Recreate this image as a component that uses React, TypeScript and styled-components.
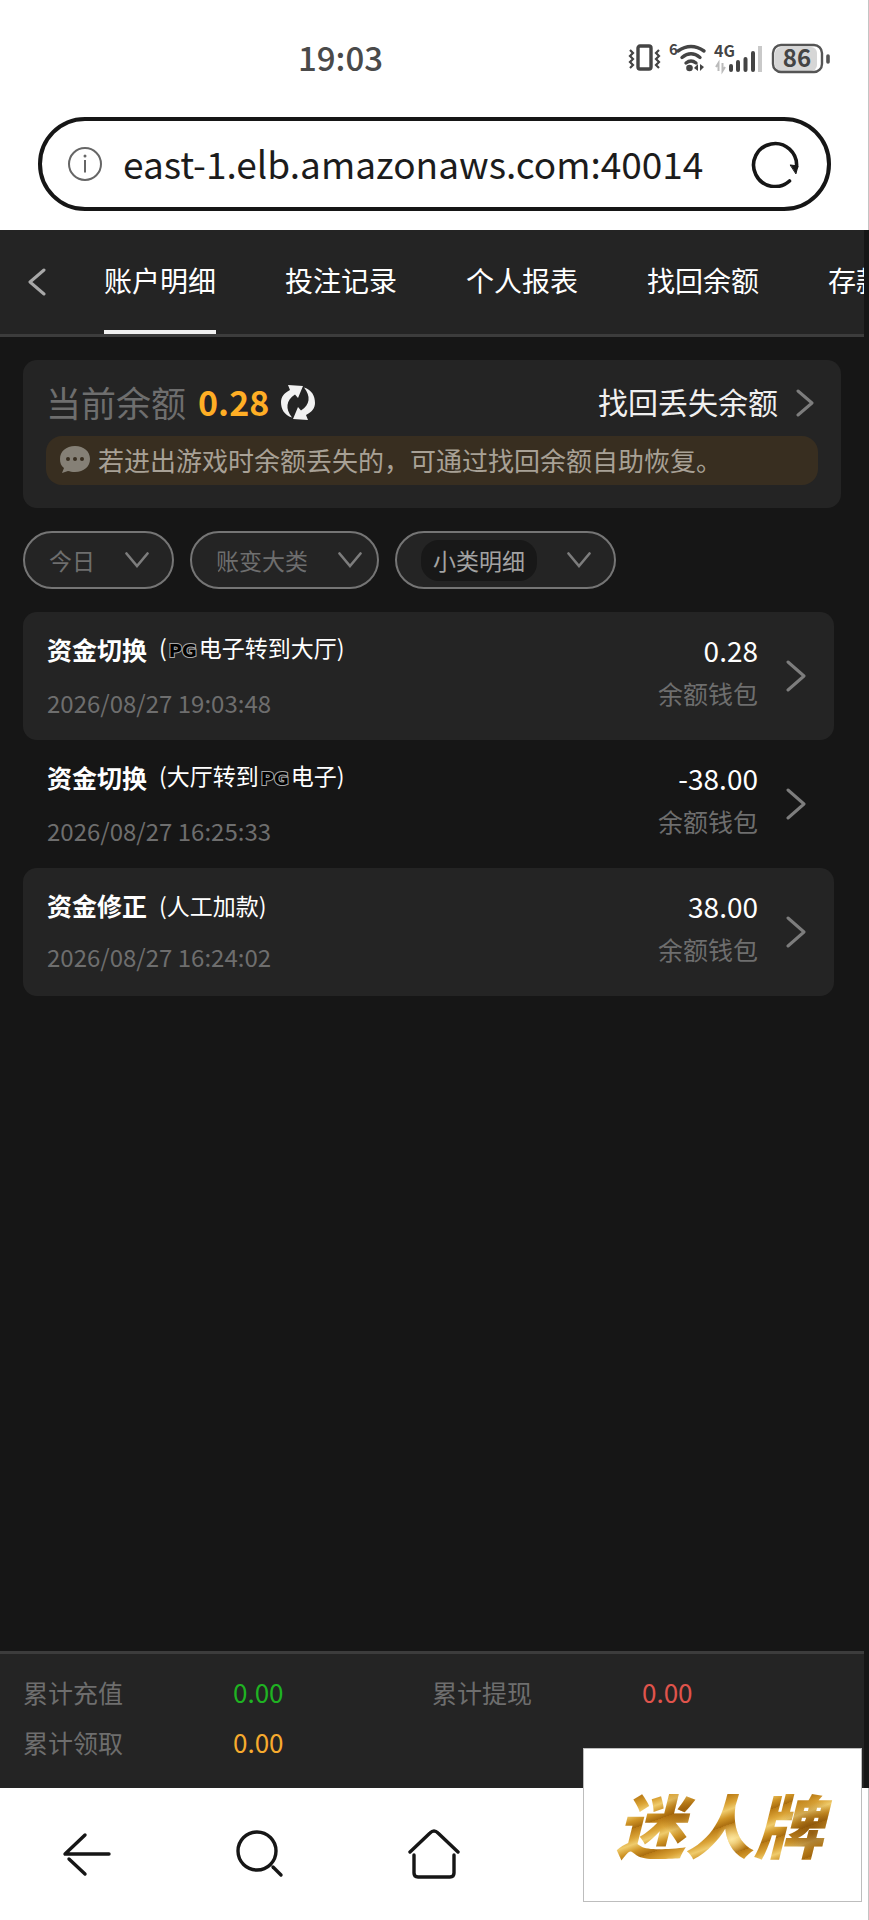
import React, { useState } from "react";
import styled, { createGlobalStyle, css } from "styled-components";

interface RecordItem {
    title: string;
    note: string[];
    time: string;
    amount: string;
}

interface ChevronProps {
    size?: "small" | "large";
    dir?: "left" | "right";
    color?: string;
}

const tabs = ["账户明细", "投注记录", "个人报表", "找回余额", "存款记录"];

// note parts equal to "PG" are drawn as the provider's outlined mark
const records: RecordItem[] = [
    { title: "资金切换", note: ["(", "PG", "电子转到大厅)"], time: "2026/08/27 19:03:48", amount: "0.28" },
    { title: "资金切换", note: ["(大厅转到", "PG", "电子)"], time: "2026/08/27 16:25:33", amount: "-38.00" },
    { title: "资金修正", note: ["(人工加款)"], time: "2026/08/27 16:24:02", amount: "38.00" },
];

const Chevron: React.FC<ChevronProps> = ({ size = "small", dir = "right", color = "#7d7d7d" }: ChevronProps) => {
    const w = size === "large" ? 20 : 18;
    const h = size === "large" ? 32 : 28;
    const d = dir === "left" ? `M${w - 2} 2L2 ${h / 2}L${w - 2} ${h - 2}` : `M2 2L${w - 2} ${h / 2}L2 ${h - 2}`;
    return (
        <svg width={w} height={h} viewBox={`0 0 ${w} ${h}`} fill="none" stroke={color} strokeWidth="3" strokeLinecap="round" strokeLinejoin="round">
            <path d={d} />
        </svg>
    );
};

const StatusIcons = () => (
    <svg width="203" height="44" viewBox="0 -6 203 44" fill="none" role="img" aria-label="状态">
        {/* vibrate */}
        <rect x="10" y="4" width="13" height="23" rx="2" stroke="#444" strokeWidth="3.4" />
        <path d="M2 8l3 3-3 3 3 3-3 3 3 3-3 3M31 8l-3 3 3 3-3 3 3 3-3 3 3 3" stroke="#444" strokeWidth="2.2" />
        {/* wifi */}
        <path d="M50 9Q63 0 76 9M54 15.5Q63 8 72 15.5M58 21Q63 17 68 21" stroke="#444" strokeWidth="3.4" strokeLinecap="round" />
        <circle cx="61.5" cy="26" r="3.3" fill="#444" />
        <path d="M66 26l4-4v7zM76 25l-4-3v7z" fill="#444" />
        {/* signal */}
        <path d="M88 25l2.5-4v8M97 25l-2.5 4v-8" stroke="#bbb" strokeWidth="2" />
        <path d="M103 24v4M110 20v8M117.5 17v11M125 11v17" stroke="#444" strokeWidth="4" strokeLinecap="round" />
        <path d="M132 4v26" stroke="#c9c9c9" strokeWidth="4" />
        {/* battery */}
        <rect x="147" y="5" width="42" height="24" rx="6" fill="#d6d6d6" />
        <rect x="145" y="3" width="49" height="27" rx="8" stroke="#555" strokeWidth="2.4" />
        <path d="M200 14v6" stroke="#555" strokeWidth="3.6" strokeLinecap="round" />
        <text x="41" y="13" fontSize="15" fontWeight="700" fill="#444">6</text>
        <text x="86" y="15" fontSize="16" fontWeight="700" fill="#444">4G</text>
        <text x="169" y="25" fontSize="24" fontWeight="700" fill="#444" textAnchor="middle">86</text>
    </svg>
);

const InfoIcon = () => (
    <svg width="36" height="36" viewBox="0 0 36 36" fill="none" stroke="#666" strokeWidth="2">
        <circle cx="18" cy="18" r="16" />
        <path d="M18 14v12.5" />
        <circle cx="18" cy="10" r="1.5" fill="#666" stroke="none" />
    </svg>
);

const ReloadIcon = () => (
    <svg width="48" height="48" viewBox="0 0 48 48" fill="none" stroke="#161616" strokeWidth="3.6" strokeLinecap="round">
        <path d="M38.5 41A21.5 21.5 0 1 1 45.5 27" />
        <path d="M39.5 25L47 26L45 33.5Z" fill="#161616" strokeWidth="1" />
    </svg>
);

const RefreshIcon = () => (
    <svg width="34" height="36" viewBox="0 0 34 36" fill="#f2f2f2">
        <path d="M7 0L22 1L17 13L14 9.5C5 15 4 24 11 32.5C3 30 0 24 0 17C0 12 3 8 9 5Z" />
        <path d="M27 35L12 34L17 22L20 25.5C29 20 30 11 23 2.5C31 5 34 11 34 18C34 23 31 27 25 30Z" />
    </svg>
);

const BubbleIcon = () => (
    <svg width="30" height="28" viewBox="0 0 30 28">
        <path d="M15 0C24 0 30 5.5 30 13S24 26 15 26C12 26 10 25.5 8 25L2 27L4 22C1 20 0 17 0 13C0 5.5 6 0 15 0Z" fill="#858076" />
        <g fill="#382e20">
            <circle cx="8" cy="13" r="2" />
            <circle cx="15" cy="13" r="2" />
            <circle cx="22" cy="13" r="2" />
        </g>
    </svg>
);

const ArrowIcon = () => (
    <svg width="52" height="52" viewBox="0 0 52 52" fill="none" stroke="#161616" strokeWidth="3.4" strokeLinecap="round" strokeLinejoin="round">
        <path d="M24 7L4 26H48M8 31L24 46" />
    </svg>
);

const SearchIcon = () => (
    <svg width="52" height="52" viewBox="0 0 52 52" fill="none" stroke="#161616" strokeWidth="3.4" strokeLinecap="round">
        <circle cx="23" cy="23" r="19" />
        <path d="M39 39L47 47" />
    </svg>
);

const HomeIcon = () => (
    <svg width="52" height="52" viewBox="0 0 52 52" fill="none" stroke="#161616" strokeWidth="3.4" strokeLinecap="round" strokeLinejoin="round">
        <path d="M2 24L22 5Q26 1 30 5L50 24M6 27V45Q6 49 10 49H42Q46 49 46 45V27" />
    </svg>
);

interface FilterProps {
    label: string;
    value: string;
    tight?: boolean;
    selected?: boolean;
}

const Filter: React.FC<FilterProps> = ({ label, value, tight, selected }: FilterProps) => (
    <FilterPill $tight={tight}>
        <FilterSelect aria-label={label} $selected={selected}>
            <option>{value}</option>
        </FilterSelect>
        <svg width="24" height="16" viewBox="0 0 24 16" fill="none" stroke="#7d7d7d" strokeWidth="2.6" strokeLinecap="round">
            <path d="M1.5 1.5L12 14L22.5 1.5" />
        </svg>
    </FilterPill>
);

const App: React.FC = () => {
    const [active, setActive] = useState(0);
    const [url, setUrl] = useState("east-1.elb.amazonaws.com:40014");

    return (
        <Page>
            <GlobalStyle />
            <BrowserTop>
                <StatusBar>
                    <Clock>19:03</Clock>
                    <StatusIcons />
                </StatusBar>
                <AddressBar>
                    <InfoIcon />
                    <AddressInput aria-label="网址" value={url} onChange={(e) => setUrl(e.target.value)} />
                    <IconButton aria-label="重新加载"><ReloadIcon /></IconButton>
                </AddressBar>
            </BrowserTop>

            <Screen>
                <Header>
                    <IconButton aria-label="返回"><Chevron dir="left" color="#a8a8a8" /></IconButton>
                    <TabList>
                        {tabs.map((tab, i) => (
                            <Tab key={tab} $active={i === active} onClick={() => setActive(i)}>{tab}</Tab>
                        ))}
                    </TabList>
                </Header>

                <Content>
                    <BalanceCard>
                        <BalanceRow>
                            <BalanceLabel>当前余额</BalanceLabel>
                            <Balance>0.28</Balance>
                            <IconButton aria-label="刷新余额"><RefreshIcon /></IconButton>
                            <RecoverLink href="#recover"><span>找回丢失余额</span><Chevron /></RecoverLink>
                        </BalanceRow>
                        <Notice>
                            <BubbleIcon />
                            若进出游戏时余额丢失的，可通过找回余额自助恢复。
                        </Notice>
                    </BalanceCard>

                    <Filters>
                        <Filter label="日期" value="今日" />
                        <Filter label="大类" value="账变大类" tight />
                        <Filter label="小类" value="小类明细" selected />
                    </Filters>

                    <RecordList>
                        {records.map((r) => (
                            <RecordRow key={r.time}>
                                <RecordInfo>
                                    <RecordTitle>
                                        {r.title}
                                        <Note>
                                            {r.note.map((part) => (part === "PG" ? <Outlined key={part}>{part}</Outlined> : part))}
                                        </Note>
                                    </RecordTitle>
                                    <Time>{r.time}</Time>
                                </RecordInfo>
                                <RecordAmount>
                                    <Amount>{r.amount}</Amount>
                                    <Wallet>余额钱包</Wallet>
                                </RecordAmount>
                                <Chevron size="large" />
                            </RecordRow>
                        ))}
                    </RecordList>
                </Content>

                <Totals>
                    <Total><dt>累计充值</dt><TotalValue $color="#1fb322">0.00</TotalValue></Total>
                    <Total><dt>累计提现</dt><TotalValue $color="#e0544c">0.00</TotalValue></Total>
                    <Total><dt>累计领取</dt><TotalValue $color="#f7ab2e">0.00</TotalValue></Total>
                </Totals>
            </Screen>

            <BottomNav>
                <IconButton aria-label="后退"><ArrowIcon /></IconButton>
                <IconButton aria-label="搜索"><SearchIcon /></IconButton>
                <IconButton aria-label="主页"><HomeIcon /></IconButton>
            </BottomNav>

            <Stamp><StampText>迷人牌</StampText></Stamp>
        </Page>
    );
};

const GlobalStyle = createGlobalStyle`
  body {
    margin: 0;
    background: #ffffff;
  }
  body, button, input, select {
    font-family: "Noto Sans CJK SC", sans-serif;
  }
  * {
    box-sizing: border-box;
  }
  svg {
    flex-shrink: 0;
    display: block;
  }
`;

const Page = styled.div`
  position: relative;
  min-height: 100vh;
  display: flex;
  flex-direction: column;
`;

const BrowserTop = styled.header`
  padding: 0 37px 19px 38px;
  border-right: 1px solid #c4c4c4;
`;

const StatusBar = styled.div`
  height: 117px;
  display: flex;
  align-items: center;
  justify-content: space-between;
  padding: 0 0 2px 260px;
`;

const Clock = styled.span`
  padding-bottom: 2px;
  font-size: 33px;
  line-height: 40px;
  font-weight: 500;
  color: #4a4a4a;
`;

const AddressBar = styled.div`
  height: 94px;
  display: flex;
  align-items: center;
  gap: 20px;
  padding: 0 28px 0 25px;
  border: 4px solid #161616;
  border-radius: 47px;
`;

const AddressInput = styled.input`
  flex: 1;
  min-width: 0;
  padding: 0 0 2px;
  border: 0;
  outline: 0;
  background: none;
  font-size: 37px;
  color: #1c1c1c;
`;

const IconButton = styled.button`
  padding: 0;
  border: 0;
  background: none;
  display: flex;
  align-items: center;
  justify-content: center;
  cursor: pointer;
`;

const Screen = styled.main`
  flex: 1;
  display: flex;
  flex-direction: column;
  padding-right: 5px;
  background: #161616;
`;

const Header = styled.div`
  height: 107px;
  display: flex;
  padding-left: 28px;
  background: #242424;
  border-bottom: 3px solid #3c3c3c;
  overflow: hidden;
`;

const TabList = styled.nav`
  display: flex;
  gap: 69px;
  padding-left: 58px;
`;

const Tab = styled.button<{ $active?: boolean }>`
  flex-shrink: 0;
  padding: 0;
  border: 0;
  border-bottom: 4px solid ${({ $active }) => ($active ? "#f0f0f0" : "transparent")};
  background: none;
  font-size: 28px;
  white-space: nowrap;
  color: #ffffff;
  cursor: pointer;
`;

const Content = styled.div`
  flex: 1;
  padding: 23px 23px 0;
`;

const BalanceCard = styled.section`
  height: 148px;
  padding: 10px 23px 0;
  border-radius: 14px;
  background: #242424;
`;

const BalanceRow = styled.div`
  height: 66px;
  display: flex;
  align-items: center;

  span, strong {
    padding-bottom: 4px;
  }
`;

const BalanceLabel = styled.span`
  font-size: 35px;
  color: #6e6e6e;
`;

const Balance = styled.strong`
  margin: 0 12px;
  font-size: 34px;
  color: #ffae25;
`;

const RecoverLink = styled.a`
  margin-left: auto;
  padding-right: 4px;
  display: flex;
  align-items: center;
  gap: 18px;
  font-size: 30px;
  color: #f0f0f0;
  text-decoration: none;
`;

const Notice = styled.div`
  height: 49px;
  display: flex;
  align-items: center;
  gap: 8px;
  padding: 0 0 2px 14px;
  border-radius: 16px;
  background: #382e20;
  font-size: 26px;
  line-height: 34px;
  white-space: nowrap;
  color: #a8a196;
`;

const Filters = styled.div`
  display: flex;
  gap: 16px;
  margin: 23px 0;
`;

const FilterPill = styled.div<{ $tight?: boolean }>`
  height: 58px;
  display: flex;
  align-items: center;
  padding: 0 ${({ $tight }) => ($tight ? "15px" : "23px")} 0 24px;
  gap: 30px;
  border: 2px solid #757575;
  border-radius: 29px;
  background: #242424;
`;

const FilterSelect = styled.select<{ $selected?: boolean }>`
  appearance: none;
  height: 41px;
  padding: 0;
  border: 0;
  border-radius: 18px;
  background: none;
  font-size: 23px;
  color: #6e6e6e;

  ${({ $selected }) =>
      $selected &&
      css`
          padding: 0 12px;
          background: #181818;
          color: #a3a3a3;
      `}
`;

const RecordList = styled.ul`
  margin: 0;
  padding: 0 7px 0 0;
  list-style: none;
`;

const RecordRow = styled.li`
  height: 128px;
  display: flex;
  align-items: center;
  padding: 0 28px 0 24px;
  border-radius: 14px;

  &:nth-child(odd) {
    background: #242424;
  }
`;

const RecordInfo = styled.div`
  flex: 1;
  display: flex;
  flex-direction: column;
  gap: 18px;
  padding-bottom: 2px;
`;

const RecordTitle = styled.div`
  display: flex;
  align-items: center;
  gap: 12px;
  font-size: 25px;
  font-weight: 700;
  line-height: 34px;
  color: #ffffff;
`;

const Note = styled.span`
  font-size: 23px;
  font-weight: 400;
`;

const Outlined = styled.span`
  padding: 0 2px;
  font-family: "DejaVu Sans", sans-serif;
  font-size: 18px;
  font-weight: 700;
  color: #000000;
  paint-order: stroke fill;
  -webkit-text-stroke: 2px #a8a8a8;
`;

const Time = styled.time`
  font-size: 24px;
  line-height: 34px;
  color: #6e6e6e;
`;

const RecordAmount = styled.div`
  display: flex;
  flex-direction: column;
  align-items: flex-end;
  gap: 8px;
  margin-right: 28px;
  padding-bottom: 10px;
`;

const Amount = styled.span`
  font-size: 28px;
  line-height: 36px;
  color: #ffffff;
`;

const Wallet = styled.span`
  font-size: 25px;
  line-height: 34px;
  color: #6e6e6e;
`;

const Totals = styled.dl`
  display: grid;
  grid-template-columns: 1fr 1fr;
  margin: 0;
  padding: 13px 23px 21px;
  border-top: 3px solid #3c3c3c;
  background: #242424;
  font-size: 25px;
  line-height: 50px;
  color: #6e6e6e;
`;

const Total = styled.div`
  display: grid;
  grid-template-columns: 210px 1fr;
`;

const TotalValue = styled.dd<{ $color: string }>`
  margin: 0;
  font-size: 26px;
  color: ${({ $color }) => $color};
`;

const BottomNav = styled.nav`
  height: 132px;
  display: grid;
  grid-template-columns: repeat(5, 1fr);
  border-right: 1px solid #c4c4c4;
`;

/* site badge lying over the totals and the browser bar */
const Stamp = styled.div`
  position: absolute;
  right: 7px;
  bottom: 18px;
  padding: 24px 22px 28px 32px;
  border: 1px solid #bdbdbd;
  background: #ffffff;
`;

const StampText = styled.span`
  display: block;
  padding-right: 16px;
  font-size: 69px;
  font-style: italic;
  font-weight: 900;
  line-height: 100px;
  color: transparent;
  background:
    radial-gradient(circle at 30% 40%, rgba(150, 88, 8, 0.7), transparent 14%),
    radial-gradient(circle at 52% 66%, rgba(255, 236, 170, 0.8), transparent 12%),
    radial-gradient(circle at 88% 60%, rgba(120, 68, 6, 0.7), transparent 16%),
    repeating-linear-gradient(160deg, #b97a14 0, #dba437 9px, #efcb6c 15px, #cf9426 22px, #a96c0e 29px);
  background-clip: text;
  -webkit-background-clip: text;
`;

export default App;
